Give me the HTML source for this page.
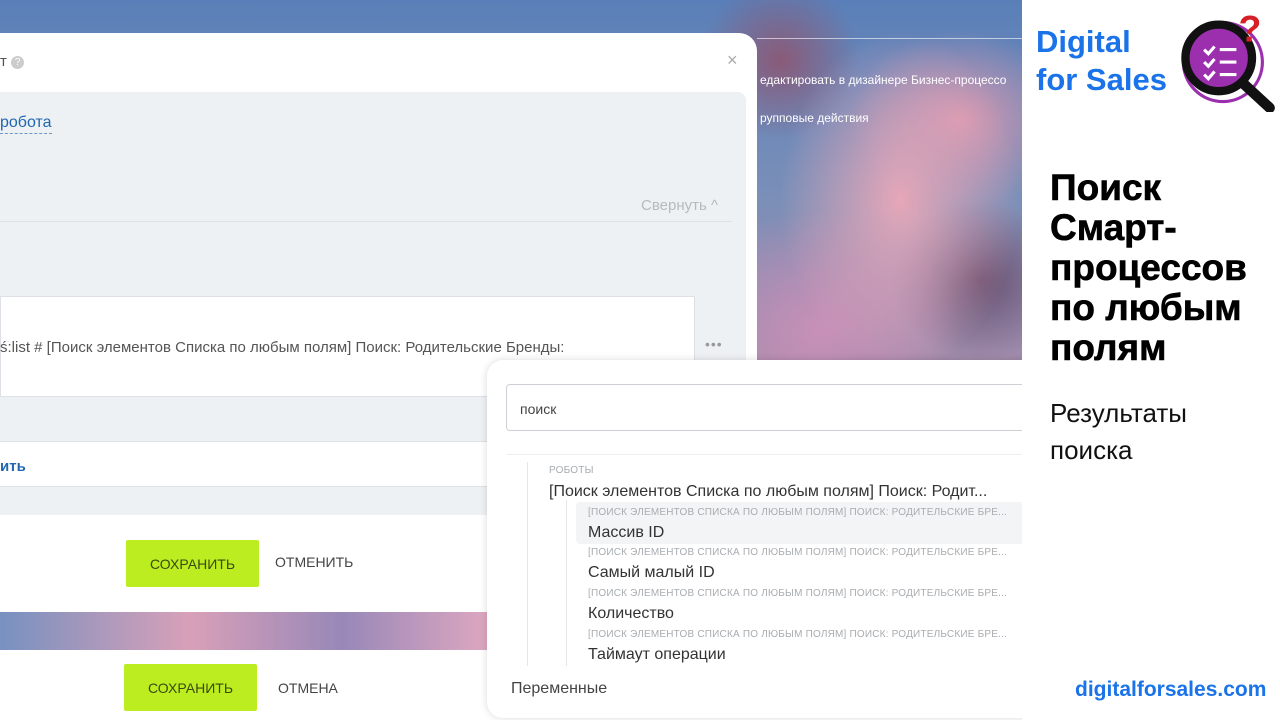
<!DOCTYPE html>
<html><head><meta charset="utf-8"><style>
*{margin:0;padding:0;box-sizing:border-box}
body{width:1280px;height:720px;overflow:hidden;position:relative;font-family:"Liberation Sans","DejaVu Sans",sans-serif;background:#fff}
.abs{position:absolute}
.bg{left:0;top:0;width:1022px;height:650px;background:
radial-gradient(ellipse 120px 170px at 900px 200px,#e6a7b8 0%,rgba(220,150,170,0) 100%),
radial-gradient(ellipse 110px 90px at 960px 120px,#d898b0 0%,rgba(200,140,170,0) 100%),
radial-gradient(ellipse 140px 120px at 820px 330px,#c890b8 0%,rgba(200,140,180,0) 100%),
radial-gradient(ellipse 80px 80px at 780px 60px,#8a5a78 0%,rgba(138,90,120,0) 100%),
radial-gradient(ellipse 90px 80px at 980px 280px,#6a5070 0%,rgba(100,80,110,0) 100%),
linear-gradient(180deg,#5a7fb8 0%,#7a8fb8 30%,#a88aa8 60%,#9a86b6 100%)}
.strip{left:0;top:612px;width:760px;height:38px;background:linear-gradient(90deg,#7891c0,#d8a0b8 25%,#9888b8 45%,#e0a8c0 65%,#b898c0 85%,#8890c0)}
.btn{background:#bbed21;color:#3a4a10;font-size:14px;display:flex;align-items:center;justify-content:center;border-radius:2px}
.sm{font-size:10px;color:#a8acb0;letter-spacing:.2px;white-space:nowrap}
.it{font-size:16px;color:#333;white-space:nowrap}
</style></head><body>
<div class="abs bg"></div>
<div class="abs" style="left:757px;top:38px;width:265px;height:1px;background:rgba(255,255,255,.6)"></div>
<div class="abs" style="left:760px;top:73px;font-size:12px;color:#fff;white-space:nowrap">едактировать в дизайнере Бизнес-процессо</div>
<div class="abs" style="left:760px;top:111px;font-size:12px;color:#fff">рупповые действия</div>
<div class="abs strip"></div>

<div class="abs" style="left:-20px;top:33px;width:777px;height:579px;background:#fff;border-radius:0 18px 0 0"></div>
<div class="abs" style="left:0;top:53px;font-size:15px;color:#555">т <span style="display:inline-block;width:13px;height:13px;border-radius:50%;background:#ccc;color:#fff;font-size:10px;text-align:center;line-height:13px;vertical-align:1px">?</span></div>
<div class="abs" style="left:727px;top:50px;font-size:18px;color:#aaa">×</div>
<div class="abs" style="left:0;top:92px;width:746px;height:423px;background:#eef1f4;border-radius:0 8px 0 0"></div>
<div class="abs" style="left:0;top:113px;font-size:16px;color:#2067b0;border-bottom:1px dashed #6a98c8;line-height:20px">робота</div>
<div class="abs" style="left:641px;top:197px;font-size:15px;color:#b5bac0">Свернуть ^</div>
<div class="abs" style="left:0;top:221px;width:732px;height:1px;background:#dde1e5"></div>
<div class="abs" style="left:0;top:296px;width:695px;height:101px;background:#fff;border:1px solid #dde1e5"></div>
<div class="abs" style="left:0;top:339px;font-size:15px;color:#555;white-space:nowrap">ś:list # [Поиск элементов Списка по любым полям] Поиск: Родительские Бренды:</div>
<div class="abs" style="left:705px;top:336px;font-size:14px;color:#999;letter-spacing:1px">•••</div>
<div class="abs" style="left:0;top:441px;width:746px;height:46px;background:#fff;border-top:1px solid #dde1e5;border-bottom:1px solid #dde1e5"></div>
<div class="abs" style="left:0;top:458px;font-size:15px;color:#2067b0;font-weight:bold">ить</div>
<div class="abs btn" style="left:126px;top:540px;width:133px;height:47px">СОХРАНИТЬ</div>
<div class="abs" style="left:275px;top:554px;font-size:14px;color:#444">ОТМЕНИТЬ</div>

<div class="abs btn" style="left:124px;top:664px;width:133px;height:47px">СОХРАНИТЬ</div>
<div class="abs" style="left:278px;top:680px;font-size:14px;color:#444">ОТМЕНА</div>

<div class="abs" style="left:487px;top:360px;width:560px;height:358px;background:#fff;border-radius:16px;box-shadow:0 0 8px rgba(0,0,0,.15)"></div>
<div class="abs" style="left:506px;top:384px;width:530px;height:47px;border:1px solid #ccd0d4;border-radius:4px"></div>
<div class="abs" style="left:520px;top:401px;font-size:14px;color:#444">поиск</div>
<div class="abs" style="left:507px;top:454px;width:515px;height:1px;background:#eee"></div>
<div class="abs" style="left:527px;top:462px;width:1px;height:204px;background:#e6e6e6"></div>
<div class="abs" style="left:566px;top:500px;width:1px;height:166px;background:#e6e6e6"></div>
<div class="abs" style="left:576px;top:502px;width:460px;height:42px;background:#f3f4f5;border-radius:4px"></div>
<div class="abs sm" style="left:549px;top:465px">РОБОТЫ</div>
<div class="abs it" style="left:549px;top:483px">[Поиск элементов Списка по любым полям] Поиск: Родит...</div>
<div class="abs sm" style="left:588px;top:507px">[ПОИСК ЭЛЕМЕНТОВ СПИСКА ПО ЛЮБЫМ ПОЛЯМ] ПОИСК: РОДИТЕЛЬСКИЕ БРЕ...</div>
<div class="abs it" style="left:588px;top:524px">Массив ID</div>
<div class="abs sm" style="left:588px;top:547px">[ПОИСК ЭЛЕМЕНТОВ СПИСКА ПО ЛЮБЫМ ПОЛЯМ] ПОИСК: РОДИТЕЛЬСКИЕ БРЕ...</div>
<div class="abs it" style="left:588px;top:564px">Самый малый ID</div>
<div class="abs sm" style="left:588px;top:588px">[ПОИСК ЭЛЕМЕНТОВ СПИСКА ПО ЛЮБЫМ ПОЛЯМ] ПОИСК: РОДИТЕЛЬСКИЕ БРЕ...</div>
<div class="abs it" style="left:588px;top:605px">Количество</div>
<div class="abs sm" style="left:588px;top:629px">[ПОИСК ЭЛЕМЕНТОВ СПИСКА ПО ЛЮБЫМ ПОЛЯМ] ПОИСК: РОДИТЕЛЬСКИЕ БРЕ...</div>
<div class="abs it" style="left:588px;top:646px">Таймаут операции</div>
<div class="abs" style="left:511px;top:680px;font-size:16px;color:#444">Переменные</div>

<div class="abs" style="left:1022px;top:0;width:258px;height:720px;background:#fff"></div>
<div class="abs" style="left:1036px;top:23px;font-size:31px;line-height:38px;color:#1a73e8;font-weight:bold">Digital<br>for Sales</div>
<svg class="abs" style="left:1174px;top:8px" width="104" height="104" viewBox="0 0 100 100">
<circle cx="47" cy="52" r="38" fill="none" stroke="#9b2fae" stroke-width="3"/>
<circle cx="43" cy="48" r="32" fill="#9b2fae" stroke="#111" stroke-width="8"/>
<line x1="66" y1="72" x2="92" y2="96" stroke="#111" stroke-width="10" stroke-linecap="round"/>
<path d="M29 40l4 4 6-7M29 52l4 4 6-7M29 64l4 4 6-7" stroke="#fff" stroke-width="3" fill="none"/>
<path d="M44 40h16M44 52h16M44 64h16" stroke="#fff" stroke-width="3"/>
<text x="62" y="32" font-size="36" font-weight="bold" fill="#d61f26" font-family="Liberation Sans">?</text>
</svg>
<div class="abs" style="left:1050px;top:168px;font-size:37px;line-height:40px;font-weight:bold;color:#000;-webkit-text-stroke:.6px #000">Поиск<br>Смарт-<br>процессов<br>по любым<br>полям</div>
<div class="abs" style="left:1050px;top:395px;font-size:26px;line-height:37px;color:#111">Результаты<br>поиска</div>
<div class="abs" style="left:1075px;top:678px;font-size:21px;font-weight:bold;color:#1a73e8">digitalforsales.com</div>
</body></html>
